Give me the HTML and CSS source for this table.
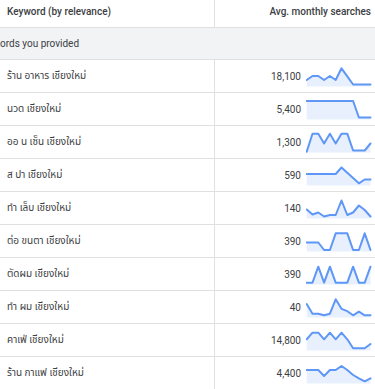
FILE: index.html
```html
<!DOCTYPE html>
<html lang="th">
<head>
<meta charset="utf-8">
<title>Keyword ideas</title>
<link rel="stylesheet" href="styles.css">
</head>
<body>
<div class="table">
  <div class="row head">
    <div class="cell kw">Keyword (by relevance)</div>
    <div class="cell vol">Avg. monthly searches</div>
  </div>
  <div class="group">ords you provided</div>
  <div class="row">
    <div class="cell kw">ร้าน อาหาร เชียงใหม่</div>
    <div class="cell vol"><span class="num">18,100</span><svg class="spark" viewBox="0 0 66 32" data-v="20,16,16,20,16,20,8.3,16.4,24.5,24.5,24.5,24.5"></svg></div>
  </div>
  <div class="row">
    <div class="cell kw">นวด เชียงใหม่</div>
    <div class="cell vol"><span class="num">5,400</span><svg class="spark" viewBox="0 0 66 32" data-v="8,8,8,8,8,8,8,8,8,24.5,24.5,24.5"></svg></div>
  </div>
  <div class="row">
    <div class="cell kw">ออ น เซ็น เชียงใหม่</div>
    <div class="cell vol"><span class="num">1,300</span><svg class="spark" viewBox="0 0 66 32" data-v="25.7,7.7,7.7,17.5,7.7,17.5,7.7,7.7,24.5,24.5,24.5,17.5"></svg></div>
  </div>
  <div class="row">
    <div class="cell kw">ส ปา เชียงใหม่</div>
    <div class="cell vol"><span class="num">590</span><svg class="spark" viewBox="0 0 66 32" data-v="15,15,15,15,15,15,8.5,13.8,19,24.3,20.5,20.5"></svg></div>
  </div>
  <div class="row">
    <div class="cell kw">ทำ เล็บ เชียงใหม่</div>
    <div class="cell vol"><span class="num">140</span><svg class="spark" viewBox="0 0 66 32" data-v="17.5,22.5,20.5,24.5,23,23,8.5,23,20.5,13.5,18,24.5"></svg></div>
  </div>
  <div class="row">
    <div class="cell kw">ต่อ ขนตา เชียงใหม่</div>
    <div class="cell vol"><span class="num">390</span><svg class="spark" viewBox="0 0 66 32" data-v="17.5,17.5,17.5,25,25,8.3,8.3,8.3,25,25,8.3,25"></svg></div>
  </div>
  <div class="row">
    <div class="cell kw">ตัดผม เชียงใหม่</div>
    <div class="cell vol"><span class="num">390</span><svg class="spark" viewBox="0 0 66 32" data-v="24.7,24.7,8.7,24.7,8.7,24.7,24.7,24.7,8.7,24.7,24.7,8.7"></svg></div>
  </div>
  <div class="row">
    <div class="cell kw">ทำ ผม เชียงใหม่</div>
    <div class="cell vol"><span class="num">40</span><svg class="spark" viewBox="0 0 66 32" data-v="13,22.7,22.7,24.3,22.7,8.3,17.8,20.2,24.3,20.7,24.3,24.3"></svg></div>
  </div>
  <div class="row">
    <div class="cell kw">คาเฟ่ เชียงใหม่</div>
    <div class="cell vol"><span class="num">14,800</span><svg class="spark" viewBox="0 0 66 32" data-v="15.3,8.7,8.7,15.3,8.7,15.3,8.7,15.3,24.3,24.3,24.3,20"></svg></div>
  </div>
  <div class="row">
    <div class="cell kw">ร้าน กาแฟ เชียงใหม่</div>
    <div class="cell vol"><span class="num">4,400</span><svg class="spark" viewBox="0 0 66 32" data-v="13,13,13,19,13,13,9,13,18,21.3,24.3,21.3"></svg></div>
  </div>
</div>
<script src="app.js"></script>
</body>
</html>
```

FILE: styles.css
```css
html, body {
  margin: 0;
  padding: 0;
  background: #ffffff;
}
body {
  width: 375px;
  overflow: hidden;
  font-family: Roboto, "Noto Sans Thai", "Noto Sans", "DejaVu Sans", sans-serif;
  font-size: 10px;
  color: #3c4043;
}
.table {
  display: flex;
  flex-direction: column;
}
.row {
  display: grid;
  grid-template-columns: 215px 1fr;
  height: 33px;
  box-sizing: border-box;
  border-bottom: 1px solid #e0e0e0;
}
.cell {
  display: flex;
  align-items: center;
  box-sizing: border-box;
  white-space: nowrap;
  overflow: hidden;
}
.kw {
  padding-left: 7px;
  border-right: 1px solid #e0e0e0;
}
.vol {
  justify-content: flex-end;
  padding-right: 3px;
}
.head {
  height: 28px;
  font-weight: 500;
}
.head .cell {
  padding-bottom: 4px;
}
.head .vol {
  padding-right: 4px;
}
.group {
  height: 32px;
  box-sizing: border-box;
  display: flex;
  align-items: center;
  background: #f1f3f4;
  border-bottom: 1px solid #e0e0e0;
  white-space: nowrap;
}
.num {
  margin-right: 5px;
}
.spark {
  width: 66px;
  height: 32px;
  flex: none;
  align-self: flex-start;
}
.spark .area {
  fill: #e8f0fe;
  stroke: none;
}
.spark .line {
  fill: none;
  stroke: #5e97f6;
  stroke-width: 2;
  stroke-linejoin: round;
  stroke-linecap: round;
}
```

FILE: app.js
```js
(function () {
  var X0 = 0.7, DX = 5.8, BASE = 26.5;
  var svgs = document.querySelectorAll('.spark');
  Array.prototype.forEach.call(svgs, function (svg) {
    var vals = svg.getAttribute('data-v').split(',').map(Number);
    var pts = vals.map(function (y, i) {
      return (X0 + DX * i).toFixed(1) + ',' + y;
    });
    var last = (X0 + DX * (vals.length - 1)).toFixed(1);
    var area = 'M' + X0 + ',' + BASE + ' L' + pts.join(' L') + ' L' + last + ',' + BASE + ' Z';
    svg.innerHTML = '<path class="area" d="' + area + '"/>' +
      '<polyline class="line" points="' + pts.join(' ') + '"/>';
  });
})();
```
